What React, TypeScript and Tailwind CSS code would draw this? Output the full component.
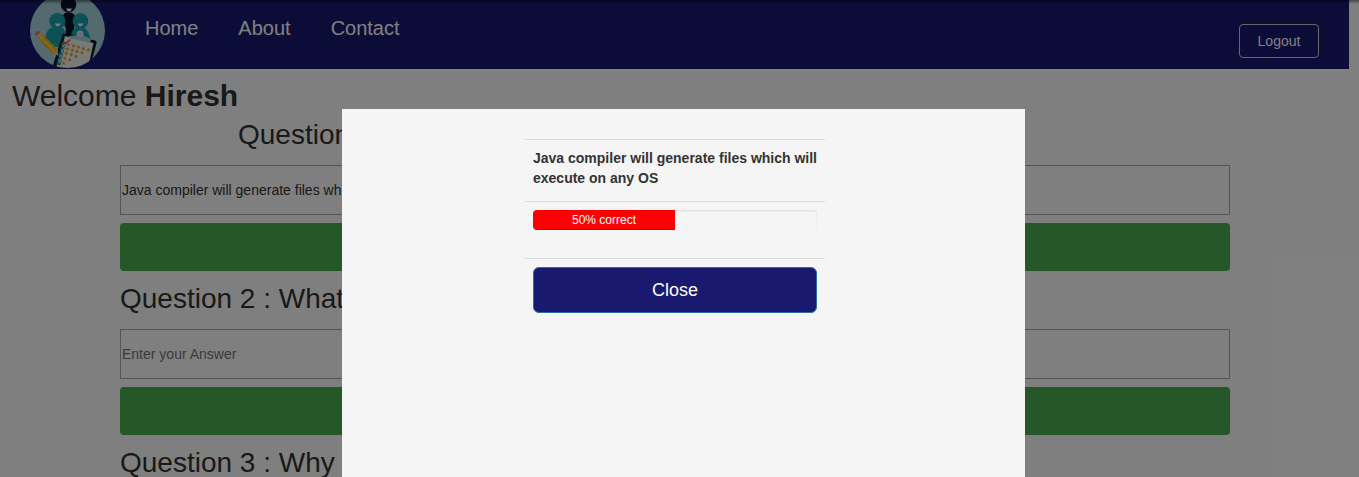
import type { ReactNode } from "react";

const stars: [number, number][] = [
  [38.5, 51.5], [43.5, 52.8], [48.4, 54], [53.4, 55.3], [58.4, 56.7],
  [37.4, 55.8], [42.3, 57], [47, 58.4], [52, 59.7],
  [36.3, 60.2], [41.2, 61.5], [46, 63.2],
  [34.8, 65], [39.7, 66.6],
  [33.5, 70],
];

function Logo() {
  return (
    <svg viewBox="0 0 75 75" className="block size-[75px] rounded-full">
      <rect width="75" height="75" fill="#a8d5df" />
      <path d="M32 26Q32 20 38 19Q46 20 46 26L44 35L46 44H35L36 36Z" fill="#07112a" />
      <circle cx="38.5" cy="11.5" r="7.8" fill="#07112a" />
      <path d="M36 15.5h6q-1 3-3 3t-3-3Z" fill="#f4f4f4" />
      <path d="M15 54Q14 35 24 34H31Q36 36 36 45V54Z" fill="#16a5b0" />
      <circle cx="27.3" cy="28" r="8" fill="#16a5b0" />
      <path d="M24.8 30.5h6q-1 2.7-3 2.7t-3-2.7Z" fill="#f4f4f4" />
      <path d="M41 49Q40 36 47 34H53Q59 36 61 49Z" fill="#16a5b0" />
      <circle cx="50.5" cy="28" r="7.8" fill="#16a5b0" />
      <path d="M47.5 30.5h6q-1 2.7-3 2.7t-3-2.7Z" fill="#f4f4f4" />
      <path d="M33 40.5L65 47.5Q67 48 66.5 50L60 75H22Z" fill="#09172f" />
      <path d="M35 43L63.5 50L58 75H26Z" fill="#f3f2f0" />
      <path d="M39 43L46 43L47 39Q50 36 53 39L54 43L61 46L60 50L39 45Z" fill="#a8d5df" />
      <circle cx="50.3" cy="40.7" r="2.2" fill="none" stroke="#e0f1f4" strokeWidth="1.4" />
      <path d="M34.2 49L28.3 72" stroke="#1795a2" strokeWidth="4" strokeDasharray="4.4 0.8" />
      <path d="M32.5 51.5l1 1.5 2-3M31.2 56.5l1 1.5 2-3M29.8 61.5l1 1.5 2-3M28.5 66.5l1 1.5 2-3" fill="none" stroke="#d6eef1" />
      <path d="M33.5 48.5L35.5 50.5L40.5 46.5" fill="none" stroke="#dc4939" strokeWidth="1.2" />
      {stars.map(([x, y]) => (
        <path
          key={`${x}-${y}`}
          transform={`translate(${x} ${y})`}
          d="M0-2.1L.6-.7 2.1-.6 1 .4 1.4 2 0 1.2-1.4 2-1 .4-2.1-.6-.6-.7Z"
          fill="#e99c24"
        />
      ))}
      <path d="M6.5 43.5L10.5 39.5L28 56.5L28 62.5L22.5 60.5Z" fill="#f4b61d" />
      <path d="M9 42L25 59" stroke="#ffd73b" strokeWidth="2" />
      <path d="M6.5 43.5L5 41.5Q5 37.5 9 38L10.5 39.5Z" fill="#ec7961" />
      <path d="M6.5 43.5L10.5 39.5L11.6 40.6L7.6 44.7Z" fill="#d9d9d9" />
      <path d="M22.5 60.5L27.7 56.5L28.5 62.8Z" fill="#efc291" />
    </svg>
  );
}

function Question({ title, value, centered }: { title: string; value?: string; centered?: boolean }) {
  return (
    <section className="mb-2 h-[156px]">
      <h2 className={centered ? "pl-[118px] text-[28px] leading-[46px] whitespace-nowrap" : "text-[28px] leading-[46px] whitespace-nowrap"}>
        {title}
      </h2>
      <input
        className="mt-[7px] block h-[50px] w-full border border-[#a9a9a9] px-px text-[14px] text-[#333] placeholder:text-[#757575]"
        placeholder="Enter your Answer"
        defaultValue={value}
      />
      <button aria-label="Submit" className="mt-2 block h-12 w-full rounded bg-[#4caf50]" />
    </section>
  );
}

function Row({ children, className }: { children: ReactNode; className: string }) {
  return <div className={`border-t border-[#ddd] px-2 ${className}`}>{children}</div>;
}

export default function App() {
  return (
    <div className="relative h-[477px] overflow-hidden bg-white font-['Liberation_Sans',Arial,sans-serif] text-[#333]">
      <nav className="mr-2.5 flex h-[69px] overflow-hidden bg-[#191970] pl-[30px] text-white">
        <div className="-mt-[7px]">
          <Logo />
        </div>
        <div className="flex gap-10 pt-[13px] pl-10 text-[20px] leading-[30px]">
          <a>Home</a>
          <a>About</a>
          <a>Contact</a>
        </div>
        <button className="mt-6 mr-[30px] ml-auto h-[34px] w-20 rounded border border-[#ccc] text-[14px]">Logout</button>
      </nav>
      <h1 className="pt-[10px] pl-3 text-[30px] leading-[33px]">
        Welcome <b>Hiresh</b>
      </h1>
      <main className="ml-[120px] w-[1110px]">
        <Question title="Question 1 :" value="Java compiler will generate files which will execute on any OS" centered />
        <Question title="Question 2 : What" />
        <Question title="Question 3 : Why" />
      </main>
      <div className="absolute inset-0 bg-black/50 pt-[109px] pl-[342px]">
        <div className="h-[368px] w-[683px] bg-[#f5f5f5] pt-[30px] pl-[183px]">
          <div className="w-[300px]">
            <Row className="h-[62px] pt-2 text-[14px] leading-5 font-bold">
              Java compiler will generate files which will execute on any OS
            </Row>
            <Row className="h-[57px] pt-2">
              <div className="h-5 overflow-hidden rounded bg-[#f5f5f5] shadow-[inset_0_1px_2px_rgba(0,0,0,0.1)]">
                <div className="h-5 w-1/2 bg-[#f00] text-center text-[12px] leading-5 text-white shadow-[inset_0_-1px_0_rgba(0,0,0,0.15)]">
                  50% correct
                </div>
              </div>
            </Row>
            <Row className="pt-2">
              <button className="h-[46px] w-full rounded-md border border-[#2e6da4] bg-[#191970] text-[18px] leading-6 text-white">
                Close
              </button>
            </Row>
          </div>
        </div>
      </div>
      <div className="pointer-events-none absolute inset-x-0 top-0 h-1 bg-linear-to-b from-black/45 to-transparent" />
    </div>
  );
}
